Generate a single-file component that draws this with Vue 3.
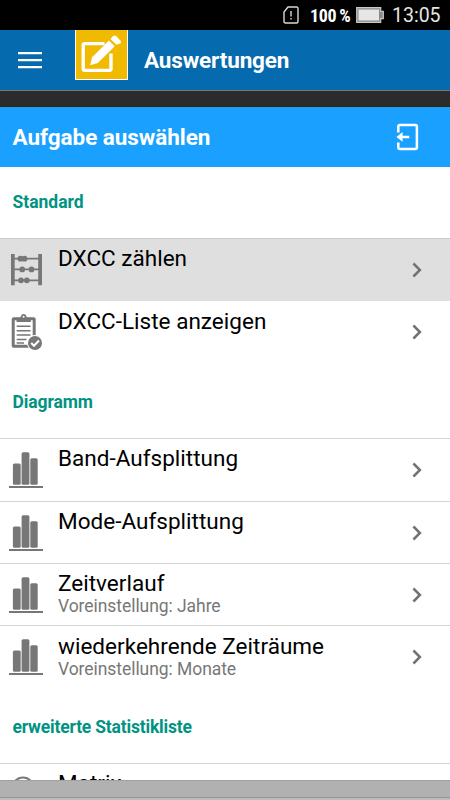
<script setup>
const groups = [
  {
    title: 'Standard',
    key: 'standard',
    items: [
      { title: 'DXCC zählen', icon: 'abacus', active: true },
      { title: 'DXCC-Liste anzeigen', icon: 'clipboard' },
    ],
  },
  {
    title: 'Diagramm',
    key: 'diagram',
    items: [
      { title: 'Band-Aufsplittung', icon: 'bars' },
      { title: 'Mode-Aufsplittung', icon: 'bars' },
      { title: 'Zeitverlauf', sub: 'Voreinstellung: Jahre', icon: 'bars' },
      { title: 'wiederkehrende Zeiträume', sub: 'Voreinstellung: Monate', icon: 'bars' },
    ],
  },
  {
    title: 'erweiterte Statistikliste',
    key: 'extended',
    items: [{ title: 'Matrix', icon: 'circle' }],
  },
]
</script>

<template>
  <div class="screen">
    <div class="status">
      <svg class="sim" width="16" height="18" viewBox="0 0 16 18">
        <path d="M5 1H13.500Q15 1 15 2.500V15.500Q15 17 13.500 17H2.500Q1 17 1 15.500V6Z" fill="none" stroke="#d8d8d8" stroke-width="1.400" />
        <path d="M8 5v5.500M8 12v1.600" stroke="#e8e8e8" stroke-width="1.300" />
      </svg>
      <span class="percent">100 %</span>
      <svg class="battery" width="28" height="16" viewBox="0 0 28 16">
        <path d="M.7.700H24.700V4.300H27.300V11.700H24.700V15.300H.7Z" fill="#8a8a8a" stroke="#c8c8c8" stroke-width="1.200" />
        <path d="M2.500 2.500H23V13.500H2.500Z" fill="#e6e6e6" />
      </svg>
      <span class="clock">13:05</span>
    </div>

    <header class="appbar">
      <svg class="menu" width="24" height="18" viewBox="0 0 24 18">
        <path d="M0 2.100H24M0 9.100H24M0 16.100H24" stroke="#fff" stroke-width="2.400" />
      </svg>
      <svg class="logo" width="53" height="50" viewBox="0 0 53 50">
        <path d="M0 0H53V50H0Z" fill="#fff" />
        <path d="M1 0H52V49H1Z" fill="#f0ba00" />
        <path d="M29.500 13.600H9.800Q8.200 13.600 8.200 15.200V38.800Q8.200 40.400 9.800 40.400H34.400Q36 40.400 36 38.800V23.500" fill="none" stroke="#fff" stroke-width="3.400" />
        <path d="M15.100 35.200L17.100 27.200L33.900 10.400L39.700 16.200L22.900 33Z" fill="#fff" />
        <path d="M35.400 8.900L38 6.300Q39.600 4.900 41.200 6.300L45.400 10.500Q46.700 12 45.300 13.500L41.200 14.700Z" fill="#fff" />
        <path d="M35 9.300L40.700 15" stroke="#f0ba00" stroke-width=".9" />
      </svg>
      <h1>Auswertungen</h1>
    </header>

    <div class="strip"></div>

    <div class="taskbar">
      <h2>Aufgabe auswählen</h2>
      <svg class="exit" width="24" height="28" viewBox="0 0 24 28">
        <path d="M2.300 9.500V3.700Q2.300 2.100 3.900 2.100H19.300Q20.900 2.100 20.900 3.700V24.300Q20.900 25.900 19.300 25.900H3.900Q2.300 25.900 2.300 24.300V19.500" fill="none" stroke="#fff" stroke-width="2.500" />
        <path d="M.4 13.900L6.600 9.100V12.700H13.200V15.200H6.600V18.700Z" fill="#fff" />
      </svg>
    </div>

    <main class="list">
      <section v-for="group in groups" :key="group.key">
        <h3 :class="group.key">{{ group.title }}</h3>
        <div v-for="item in group.items" :key="item.title" class="row" :class="{ active: item.active }">
          <svg class="icon" width="36" height="40" viewBox="0 0 36 40">
            <g v-if="item.icon === 'abacus'" fill="#777">
              <path d="M3 5h3.700v31.300H3zM30.200 5h3.800v31.300h-3.800z" />
              <path d="M6 9.700h25M6 20.400h25M6 31.300h25" stroke="#777" stroke-width="1.700" />
              <circle cx="12.500" cy="9.700" r="2.900" /><circle cx="16.500" cy="9.700" r="2.900" />
              <circle cx="14.200" cy="20.400" r="2.900" /><circle cx="23.500" cy="20.400" r="2.900" />
              <circle cx="13" cy="31.300" r="2.900" /><circle cx="18.800" cy="31.300" r="2.900" />
            </g>
            <g v-else-if="item.icon === 'clipboard'">
              <rect x="5.200" y="7.700" width="21" height="27.500" rx=".5" fill="none" stroke="#777" stroke-width="3" />
              <path d="M8.500 11V6.700H12.500Q12.900 2.900 15.600 2.900T18.800 6.700H22.800V11Z" fill="#777" />
              <circle cx="15.600" cy="5.800" r="1" fill="#fff" />
              <path d="M8.700 15.300H22.500M8.700 19.700H22.500M8.700 24.100H22.500M8.700 28.500H18.500M8.700 32H16" stroke="#777" stroke-width="1.500" />
              <circle cx="27" cy="32" r="8" fill="#fff" /><circle cx="27" cy="32" r="7" fill="#777" />
              <path d="M23.200 32L26 34.800L31 29.500" fill="none" stroke="#fff" stroke-width="2" />
            </g>
            <g v-else-if="item.icon === 'bars'" fill="#777">
              <rect x="4.900" y="14.500" width="7.800" height="21.200" rx="1.500" />
              <rect x="13.600" y="3.200" width="7.800" height="32.500" rx="1.500" />
              <rect x="22.300" y="9.300" width="7.400" height="26.400" rx="1.500" />
              <path d="M1 37.100H35V39H1Z" />
            </g>
            <circle v-else cx="15" cy="14" r="10.500" fill="none" stroke="#777" stroke-width="2" />
          </svg>
          <div class="copy">
            <div class="title">{{ item.title }}</div>
            <div v-if="item.sub" class="sub">{{ item.sub }}</div>
          </div>
          <svg class="chevron" width="10" height="16" viewBox="0 0 10 16">
            <path d="M1.400 1.500L7.900 8L1.400 14.500" fill="none" stroke="#727272" stroke-width="2.500" />
          </svg>
        </div>
      </section>
    </main>
    <footer></footer>
  </div>
</template>

<style>
body { margin: 0; }
</style>

<style scoped>
* { box-sizing: border-box; }
.screen { width: 450px; height: 800px; display: flex; flex-direction: column; overflow: hidden; background: #fff; font-family: Roboto, sans-serif; }
.screen > * { flex-shrink: 0; }
h1, h2, h3 { margin: 0; white-space: nowrap; }
.status { height: 30px; background: #000; color: #e4e4e4; display: flex; align-items: center; justify-content: flex-end; padding-right: 9px; }
.sim { margin-right: 11px; }
.percent { font-family: "Roboto Condensed", Roboto, sans-serif; font-size: 18px; font-weight: 700; color: #fff; width: 41px; letter-spacing: -0.300px; word-spacing: -1px; white-space: nowrap; }
.battery { margin-left: 5px; }
.clock { font-size: 19.500px; line-height: 30px; width: 49px; margin-left: 8px; padding-top: 1px; white-space: nowrap; }
.appbar { height: 60px; background: #056aae; display: flex; align-items: flex-start; padding-left: 18px; }
.menu { margin-top: 21px; }
.logo { margin-left: 33px; }
h1 { font-size: 22.500px; line-height: 60px; font-weight: 700; letter-spacing: -0.150px; color: #fff; margin-left: 16px; }
.strip { height: 17px; background: #2b2b2b; border-top: 1px solid #79776e; border-bottom: 1px solid #33250e; }
.taskbar { height: 60px; background: #1aa1ff; color: #fff; display: flex; align-items: center; justify-content: space-between; padding: 0 30px 0 12.500px; }
h2 { font-size: 22.500px; line-height: 60px; letter-spacing: -0.050px; font-weight: 700; }
.list { height: 613px; overflow: hidden; }
h3 { height: 75.400px; padding: 27px 12.500px 0; font-size: 17.500px; line-height: 24px; letter-spacing: -0.100px; color: #009383; font-weight: 700; }
h3.standard { height: 71px; padding-top: 23px; letter-spacing: 0; }
h3.extended { letter-spacing: -0.190px; }
.row { height: 62.400px; border-top: 1px solid #d4d4d4; display: flex; padding-left: 8px; }
.row.active { background: #dfdfdf; border-color: #cbcbcb; }
.row.active + .row { border-color: #dfdfdf; }
.icon { margin-top: 10px; flex: none; }
.copy { margin-left: 14px; width: 354px; padding-top: 6.300px; white-space: nowrap; }
.title { font-size: 22.500px; line-height: 27px; color: #000; letter-spacing: .02px; }
.sub { font-size: 17.500px; line-height: 19.700px; color: #777; letter-spacing: -0.060px; }
.chevron { margin-top: 23px; flex: none; }
footer { height: 20px; background: linear-gradient(#b1b1b1 16px, #969696 16px, #969696 17px, #bcbcbc 17px); border-top: 1px solid #a0a0a0; }
</style>
